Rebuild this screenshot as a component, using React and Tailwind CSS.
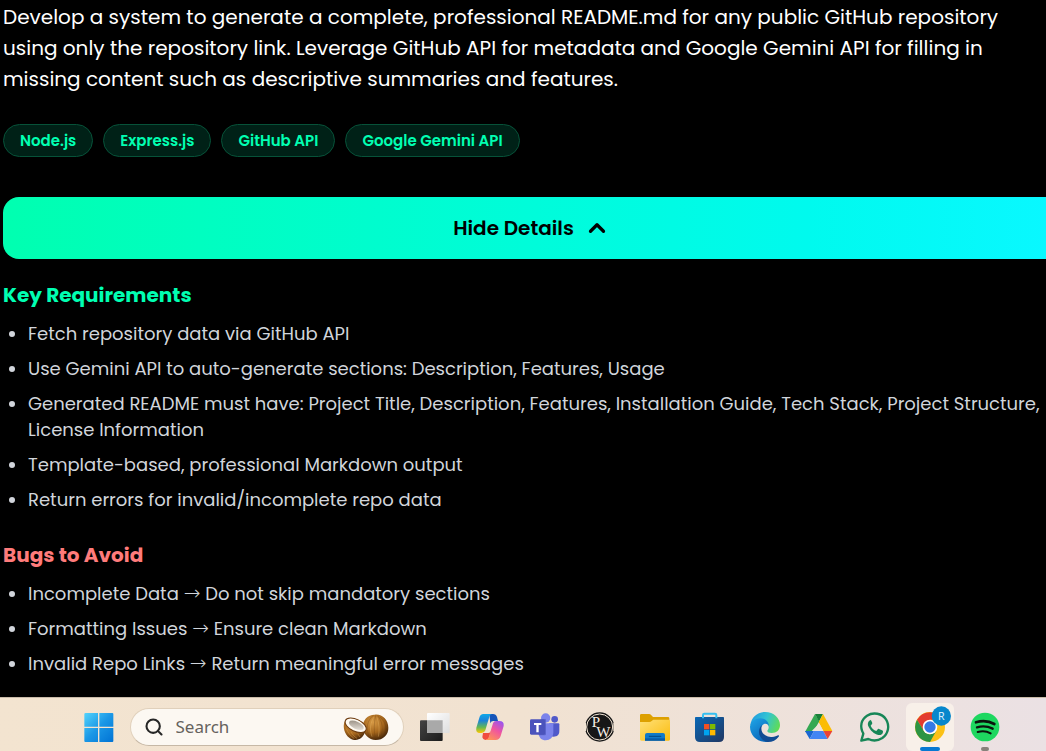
import { ChevronUp, Search } from "lucide-react";

const tags = ["Node.js", "Express.js", "GitHub API", "Google Gemini API"];

const requirements = [
  "Fetch repository data via GitHub API",
  "Use Gemini API to auto-generate sections: Description, Features, Usage",
  "Generated README must have: Project Title, Description, Features, Installation Guide, Tech Stack, Project Structure, License Information",
  "Template-based, professional Markdown output",
  "Return errors for invalid/incomplete repo data",
];

const bugs = [
  ["Incomplete Data", "Do not skip mandatory sections"],
  ["Formatting Issues", "Ensure clean Markdown"],
  ["Invalid Repo Links", "Return meaningful error messages"],
];

function Icon({ children }) {
  return (
    <svg viewBox="0 0 90 90" className="size-[30px] overflow-visible" aria-hidden="true">
      {children}
    </svg>
  );
}

function StartIcon() {
  return (
    <Icon>
      <defs>
        <linearGradient id="win" x1="0" y1="0" x2="90" y2="90" gradientUnits="userSpaceOnUse">
          <stop offset="0" stopColor="#55d6fd" />
          <stop offset="0.5" stopColor="#1a97e6" />
          <stop offset="1" stopColor="#0072d4" />
        </linearGradient>
      </defs>
      <path
        fill="url(#win)"
        d="M5 3h37v41H1V6q0-3 4-3ZM46 3h39q3 0 3 3v38H46ZM1 48h41v42H4q-3 0-3-3ZM46 48h42v39q0 3-3 3H46Z"
      />
    </Icon>
  );
}

function CoconutIcon() {
  return (
    <svg viewBox="0 0 138 81" className="h-[27px] w-[46px] shrink-0" aria-hidden="true">
      <defs>
        <radialGradient id="nut" cx="0.4" cy="0.3" r="0.75">
          <stop offset="0" stopColor="#d79a45" />
          <stop offset="0.55" stopColor="#a5661c" />
          <stop offset="1" stopColor="#3d1f06" />
        </radialGradient>
        <linearGradient id="flesh" x1="0" y1="0" x2="1" y2="1">
          <stop offset="0" stopColor="#8f8578" />
          <stop offset="1" stopColor="#f4efe8" />
        </linearGradient>
      </defs>
      <path fill="url(#nut)" d="M60 40C58 17 76 1 96 2c22-2 40 16 40 39 1 21-16 37-38 37-20 0-37-16-38-38Z" />
      <g fill="none" stroke="#5f350b" strokeWidth="2" opacity="0.4">
        <path d="M91 4C73 20 68 39 78 67M98 4c-5 23-6 43-1 70M104 5c15 18 17 40 9 65M111 9c20 18 21 39 12 52" />
      </g>
      <g fill="none" stroke="#f0c06f" strokeWidth="2" opacity="0.5">
        <path d="M93 9C82 26 79 45 87 68M102 10c7 20 8 38 4 58" />
      </g>
      <path fill="url(#nut)" d="M3 29C5 15 26 9 43 17c21 8 30 22 24 35C61 72 46 81 30 77 12 72-1 49 3 29Z" />
      <ellipse cx="38" cy="34" rx="34" ry="18" transform="rotate(25 38 34)" fill="#fffaf1" stroke="#6c3b10" strokeWidth="3" />
      <ellipse cx="40" cy="34" rx="24" ry="11" transform="rotate(25 40 34)" fill="url(#flesh)" />
      <path d="M10 44c6 14 13 22 24 30M24 54c5 9 11 15 18 19M44 59l7 10" fill="none" stroke="#e0a049" strokeWidth="2" opacity="0.7" />
    </svg>
  );
}

function TaskViewIcon() {
  return (
    <Icon>
      <defs>
        <linearGradient id="tvDark" x1="0" y1="0" x2="1" y2="1">
          <stop offset="0" stopColor="#444" />
          <stop offset="1" stopColor="#1b1b1b" />
        </linearGradient>
        <linearGradient id="tvLight" x1="0" y1="0" x2="1" y2="1">
          <stop offset="0" stopColor="#fff" />
          <stop offset="1" stopColor="#dedede" />
        </linearGradient>
      </defs>
      <rect x="0" y="25" width="68" height="62" rx="3" fill="url(#tvDark)" />
      <rect x="21" y="3" width="68" height="60" rx="3" fill="url(#tvLight)" />
      <path d="M21 25h47v38H24q-3 0-3-3Z" fill="#a9a9a9" />
    </Icon>
  );
}

function CopilotIcon() {
  return (
    <Icon>
      <defs>
        <linearGradient id="cpA" x1="0" y1="0" x2="0" y2="1">
          <stop offset="0" stopColor="#0fa8e8" />
          <stop offset="0.35" stopColor="#1c82d8" />
          <stop offset="0.7" stopColor="#64b853" />
          <stop offset="1" stopColor="#ffc800" />
        </linearGradient>
        <linearGradient id="cpB" x1="0.8" y1="0" x2="0.2" y2="1">
          <stop offset="0" stopColor="#9a55ef" />
          <stop offset="0.45" stopColor="#f0559f" />
          <stop offset="1" stopColor="#ff9654" />
        </linearGradient>
      </defs>
      <path fill="#1555b9" d="M43 6h11q9 0 12 9l3 12H55q-7 0-9 7Z" />
      <path fill="#f04b3e" d="M24 63h16q6 0 8-7l-6 21q-3 7-11 7-7 0-9-8Z" />
      <path fill="url(#cpA)" d="M25 6h26q-6 1-8 8L31 55q-3 8-11 8H15Q1 63 4 47L13 17Q16 6 25 6Z" />
      <path fill="url(#cpB)" d="M63 27h10q15 0 13 15l-9 30q-4 12-15 12H31q7 0 10-8l13-42q2-7 9-7Z" />
    </Icon>
  );
}

function TeamsIcon() {
  return (
    <Icon>
      <circle cx="74" cy="22" r="10" fill="#5059c9" />
      <path d="M58 34h27q3 0 3 3v20c0 12-7 17-17 17-7 0-11-3-13-8Z" fill="#5059c9" />
      <circle cx="47" cy="18" r="14" fill="#7b83eb" />
      <path d="M26 34h41q3 0 3 3v24c0 15-10 24-23 24-12 0-21-8-21-22Z" fill="#7b83eb" />
      <path d="M31 22h17v44q0 4-4 4H26V34h5Z" fill="#414ab0" opacity="0.55" />
      <rect x="0" y="22" width="45" height="46" rx="4" fill="#4b53bc" />
      <path d="M12 33h22v6h-8v22h-7V39h-7Z" fill="#fff" />
    </Icon>
  );
}

function PwIcon() {
  return (
    <Icon>
      <circle cx="44" cy="45" r="44" fill="#171717" />
      <circle cx="44" cy="45" r="39" fill="none" stroke="#f2e5d5" strokeWidth="3" />
      <path d="M0 33v24M88 33v24" stroke="#f2e5d5" strokeWidth="6" />
      <text fontSize="45" fontFamily="Liberation Serif, serif" fill="#f7eee3">
        <tspan x="20" y="46">P</tspan>
        <tspan x="34" y="74">W</tspan>
      </text>
    </Icon>
  );
}

function FolderIcon() {
  return (
    <Icon>
      <defs>
        <linearGradient id="folder" x1="0" y1="0" x2="1" y2="1">
          <stop offset="0" stopColor="#ffe078" />
          <stop offset="1" stopColor="#fbbc0d" />
        </linearGradient>
      </defs>
      <path d="M4 6h23q4 0 7 4l5 5h45q4 0 4 4v17H0V10q0-4 4-4Z" fill="#dda000" />
      <path d="M0 30h28q4 0 7-3l5-4h46q4 0 4 4v55q0 4-4 4H4q-4 0-4-4Z" fill="url(#folder)" />
      <path d="M15 86V69q0-6 6-6h48q6 0 6 6v17Z" fill="#127ac8" />
      <path d="M15 79h60v7H15Z" fill="#0a5ca8" />
      <path d="M28 73h34" stroke="#07508f" strokeWidth="4" strokeLinecap="round" />
    </Icon>
  );
}

function StoreIcon() {
  return (
    <Icon>
      <defs>
        <linearGradient id="store" x1="0" y1="0" x2="1" y2="1">
          <stop offset="0" stopColor="#0968b6" />
          <stop offset="1" stopColor="#213762" />
        </linearGradient>
      </defs>
      <path d="M24 20V9q0-4 4-4h32q4 0 4 4v11" fill="none" stroke="#35bff0" strokeWidth="6" />
      <path d="M0 17q0-2 2-2h83q2 0 2 2v58q0 15-15 15H15Q0 90 0 75Z" fill="url(#store)" />
      <path d="M24 15v4M64 15v4" stroke="#35bff0" strokeWidth="6" />
      <path d="M27 36h16v16H27Z" fill="#f25022" />
      <path d="M45 36h16v16H45Z" fill="#7fba00" />
      <path d="M27 54h16v16H27Z" fill="#00a4ef" />
      <path d="M45 54h16v16H45Z" fill="#ffb900" />
    </Icon>
  );
}

function EdgeIcon() {
  return (
    <Icon>
      <defs>
        <linearGradient id="edTop" x1="0" y1="0.3" x2="1" y2="0.6">
          <stop offset="0" stopColor="#229be0" />
          <stop offset="0.5" stopColor="#32c4d3" />
          <stop offset="1" stopColor="#60dc55" />
        </linearGradient>
        <linearGradient id="edLeft" x1="0" y1="0" x2="0.6" y2="1">
          <stop offset="0" stopColor="#1fa6e7" />
          <stop offset="1" stopColor="#0a66b9" />
        </linearGradient>
      </defs>
      <path fill="url(#edTop)" d="M1 40C4 16 22 0 45 0c27 0 45 19 45 39 0 15-10 24-25 24-9 0-14-3-13-7 5-6 5-11 2-17C43 19 11 21 1 40Z" />
      <path fill="url(#edLeft)" d="M0 44c2-16 16-25 31-25 14 0 25 9 26 23-5-9-15-9-21-1-12 17-3 43 20 48C25 94 0 72 0 44Z" />
      <path fill="#104b93" d="M36 39c-7 19 6 35 27 36 10 1 17-3 21-5 3-1 4 1 2 4-8 11-21 17-34 16-22-4-35-34-16-51Z" />
    </Icon>
  );
}

function DriveIcon() {
  return (
    <Icon>
      <path d="M0 60 30 6l15 26-28 28Z" fill="#34a853" />
      <path d="M30 6h24L42 29Z" fill="#188038" />
      <path d="M54 6 82 57H55L41 31Z" fill="#fbbc04" />
      <path d="M0 57h27L14 81Z" fill="#1967d2" />
      <path d="M27 57h28l13 24H14Z" fill="#4285f4" />
      <path d="M55 57h27L68 81Z" fill="#ea4335" />
      <path d="M41 31 27 57h28Z" fill="#f0e3d8" />
    </Icon>
  );
}

function WhatsAppIcon() {
  return (
    <Icon>
      <path d="M4 86 10 65C-2 43 4 22 21 11 40-1 66 4 78 22c12 19 7 43-11 56-14 9-29 9-42 3Z" fill="none" stroke="#178657" strokeWidth="7" strokeLinejoin="round" />
      <path d="M31 25c-7 2-9 11-6 18 6 13 17 23 30 26 7 1 14-3 14-10 0-3-1-3-3-4l-9-4c-2-1-3 0-5 2l-3 4c-8-3-14-9-17-16l4-5c2-2 0-4 0-5l-3-6c-1-2-1-2-2 0Z" fill="#178657" />
    </Icon>
  );
}

function ChromeIcon() {
  return (
    <Icon>
      <circle cx="45" cy="45" r="45" fill="#fbc116" />
      <path d="M6 23A45 45 0 0 1 84 23H45L26 56Z" fill="#e33b2e" />
      <path d="M6 23 26 56c9 13 24 15 38 0L45 90A45 45 0 0 1 6 23Z" fill="#2c9444" />
      <circle cx="45" cy="45" r="22" fill="#fff" />
      <circle cx="45" cy="45" r="17" fill="#3579e6" />
      <circle cx="79" cy="12" r="29" fill="#0787cc" />
      <text x="79" y="23" textAnchor="middle" fontSize="32" fontFamily="Open Sans, sans-serif" fill="#e6f5ff">R</text>
    </Icon>
  );
}

function SpotifyIcon() {
  return (
    <Icon>
      <circle cx="45" cy="45" r="43" fill="#1ed760" />
      <g fill="none" stroke="#0b130d" strokeLinecap="round">
        <path d="M18 31c19-6 39-4 55 5" strokeWidth="8" />
        <path d="M21 46c17-5 33-3 47 4" strokeWidth="7" />
        <path d="M23 60c14-4 27-3 39 4" strokeWidth="6" />
      </g>
    </Icon>
  );
}

const apps = [
  { name: "Task View", Art: TaskViewIcon },
  { name: "Copilot", Art: CopilotIcon },
  { name: "Teams", Art: TeamsIcon },
  { name: "PW", Art: PwIcon },
  { name: "File Explorer", Art: FolderIcon },
  { name: "Microsoft Store", Art: StoreIcon },
  { name: "Edge", Art: EdgeIcon },
  { name: "Google Drive", Art: DriveIcon },
  { name: "WhatsApp", Art: WhatsAppIcon },
  { name: "Chrome", Art: ChromeIcon, state: "active" },
  { name: "Spotify", Art: SpotifyIcon, state: "running" },
];

function Taskbar() {
  return (
    <nav
      aria-label="Taskbar"
      className="mt-auto flex justify-center gap-[7px] border-t border-[#c9bba9] bg-linear-to-r from-[#f3e4d0] via-[#f1e2d1] to-[#ebe1e4] pt-[5px] pl-[37px]"
    >
      <button aria-label="Start" className="flex size-12 shrink-0 items-center justify-center">
        <StartIcon />
      </button>
      <label className="my-[5px] flex h-[38px] w-[274px] shrink-0 items-center rounded-full border border-[#e0d0bb] border-b-[#c6b8a6] bg-[#fcf8f2] pr-[14px] pl-[13px]">
        <Search className="size-5 shrink-0 text-[#262626]" strokeWidth={2.5} aria-hidden="true" />
        <input
          type="search"
          aria-label="Search"
          placeholder="Search"
          className="ml-3 min-w-0 flex-1 bg-transparent font-['Noto_Sans',sans-serif] text-[17px] outline-none placeholder:text-[#66625d]"
        />
        <CoconutIcon />
      </label>
      {apps.map(({ name, Art, state }) => (
        <button
          key={name}
          aria-label={name}
          className={
            state === "active"
              ? "relative flex size-12 shrink-0 items-center justify-center rounded-md bg-[#f8f0e9]"
              : "relative flex size-12 shrink-0 items-center justify-center"
          }
        >
          <Art />
          {state === "active" && <span className="absolute bottom-0 h-1 w-5 rounded-full bg-[#0879d2]" />}
          {state === "running" && <span className="absolute bottom-0 h-1 w-2 rounded-full bg-[#88817b]" />}
        </button>
      ))}
    </nav>
  );
}

export default function App() {
  return (
    <div className="flex min-h-screen flex-col overflow-x-hidden bg-black font-[Poppins,Inter,sans-serif]">
      <main className="pb-5 pl-[3px]">
        <p className="pt-[2px] pr-8 text-[20px] leading-[31px] text-white">
          Develop a system to generate a complete, professional README.md for any public GitHub repository using only
          the repository link. Leverage GitHub API for metadata and Google Gemini API for filling in missing content
          such as descriptive summaries and features.
        </p>

        <ul className="mt-[29px] flex flex-wrap gap-[10px]">
          {tags.map((tag) => (
            <li
              key={tag}
              className="rounded-full border border-[#075239] bg-[#002117] px-4 py-1 text-[15px] leading-[23px] font-semibold text-[#00ffb2]"
            >
              {tag}
            </li>
          ))}
        </ul>

        <button
          aria-expanded="true"
          aria-controls="details"
          className="mt-10 flex h-[62px] w-full items-center justify-center gap-[10px] rounded-l-2xl bg-linear-to-r from-[#00ffb0] to-[#09f8ff] pl-[14px] text-[20px] font-semibold text-black"
        >
          Hide Details
          <ChevronUp className="size-[26px]" strokeWidth={3} aria-hidden="true" />
        </button>

        <div id="details">
          <h2 className="mt-[21px] text-[20px] leading-[31px] font-bold text-[#00ffb2]">Key Requirements</h2>
          <ul className="mt-[10px] flex list-disc flex-col gap-[9px] pl-[25px] text-[18px] leading-[26px] text-[#d1d5db]">
            {requirements.map((text) => (
              <li key={text}>{text}</li>
            ))}
          </ul>

          <h2 className="mt-[27px] text-[20px] leading-[31px] font-bold text-[#ff7b7b]">Bugs to Avoid</h2>
          <ul className="mt-[10px] flex list-disc flex-col gap-[9px] pl-[25px] text-[18px] leading-[26px] text-[#d1d5db]">
            {bugs.map(([problem, advice]) => (
              <li key={problem}>
                {problem} <span className="font-['DejaVu_Sans',sans-serif] text-[20px] leading-none font-extralight">→</span>{" "}
                {advice}
              </li>
            ))}
          </ul>
        </div>
      </main>
      <Taskbar />
    </div>
  );
}
